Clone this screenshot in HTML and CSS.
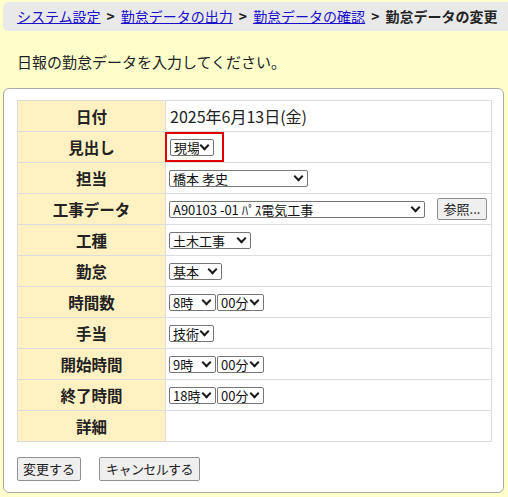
FILE: index.html
```html
<!DOCTYPE html>
<html lang="ja">
<head>
<meta charset="utf-8">
<title>勤怠データの変更</title>
<link rel="stylesheet" href="styles.css">
</head>
<body>
<div class="crumbs">
  <a href="#">システム設定</a><span class="sep">&gt;</span><a href="#">勤怠データの出力</a><span class="sep">&gt;</span><a href="#">勤怠データの確認</a><span class="sep">&gt;</span><span class="current">勤怠データの変更</span>
</div>
<p class="msg">日報の勤怠データを入力してください。</p>
<div class="panel">
  <table class="form">
    <tr><th>日付</th><td class="date">2025年6月13日(金)</td></tr>
    <tr><th>見出し</th><td><span class="mark"><span class="sel"><select class="w44"><option>現場</option></select></span></span></td></tr>
    <tr><th>担当</th><td><span class="sel"><select class="w139"><option>橋本 孝史</option></select></span></td></tr>
    <tr><th>工事データ</th><td><div class="row"><span class="sel"><select class="w256"><option>A90103 -01 ﾊﾟｽ電気工事</option></select></span><button class="ref">参照...</button></div></td></tr>
    <tr><th>工種</th><td><span class="sel"><select class="w82"><option>土木工事</option></select></span></td></tr>
    <tr><th>勤怠</th><td><span class="sel"><select class="w53"><option>基本</option></select></span></td></tr>
    <tr><th>時間数</th><td><div class="row pair"><span class="sel"><select class="w47"><option>8時</option></select></span><span class="sel"><select class="w47"><option>00分</option></select></span></div></td></tr>
    <tr><th>手当</th><td><span class="sel"><select class="w45"><option>技術</option></select></span></td></tr>
    <tr><th>開始時間</th><td><div class="row pair"><span class="sel"><select class="w47"><option>9時</option></select></span><span class="sel"><select class="w47"><option>00分</option></select></span></div></td></tr>
    <tr><th>終了時間</th><td><div class="row pair"><span class="sel"><select class="w47"><option>18時</option></select></span><span class="sel"><select class="w47"><option>00分</option></select></span></div></td></tr>
    <tr><th>詳細</th><td></td></tr>
  </table>
  <div class="actions">
    <button class="btn b-ok">変更する</button>
    <button class="btn b-cancel">キャンセルする</button>
  </div>
</div>
</body>
</html>
```
FILE: styles.css
```css
html, body {
  overflow: hidden;
}
body {
  margin: 0;
  padding: 2px 0 0 3px;
  background: #ffffcc;
  font-family: "Noto Sans CJK JP", "Noto Sans", sans-serif;
  color: #222;
}
.crumbs {
  height: 29px;
  line-height: 29px;
  margin-right: -12px;
  padding-left: 14px;
  background: #e9e9e9;
  border-radius: 6px;
  font-size: 14px;
  white-space: nowrap;
  overflow: hidden;
}
.crumbs a {
  color: #1a0dcc;
  text-decoration: underline;
}
.crumbs .sep {
  font-weight: bold;
  margin: 0 6px;
  color: #222;
}
.crumbs .current {
  font-weight: bold;
  color: #222;
}
.msg {
  margin: 22px 0 17px;
  padding-left: 14px;
  font-size: 15px;
  line-height: 18px;
}
.panel {
  width: 475px;
  padding: 11px 11px 11px 13px;
  background: #fff;
  border: 1px solid #a9a9a9;
  border-radius: 6px;
}
.form {
  width: 475px;
  border-collapse: collapse;
  border: 1px solid #d6d6d6;
}
.form th, .form td {
  border: 1px solid #dcdcdc;
  height: 30px;
  padding: 0 0 0 3px;
}
.form th {
  width: 147px;
  background: #fff1c2;
  font-size: 15.5px;
  font-weight: bold;
  text-align: center;
  padding: 0;
}
.form td {
  font-size: 13px;
  line-height: 0;
}
.form td.date {
  font-size: 16px;
  line-height: 20px;
  padding-left: 4px;
}
.sel {
  display: inline-block;
  position: relative;
  vertical-align: middle;
  line-height: 0;
}
.sel::after {
  content: "";
  position: absolute;
  right: 6px;
  top: 3px;
  width: 5px;
  height: 5px;
  border-right: 2px solid #1a1a1a;
  border-bottom: 2px solid #1a1a1a;
  transform: rotate(45deg);
  pointer-events: none;
}
select {
  -webkit-appearance: none;
  appearance: none;
  box-sizing: border-box;
  height: 17px;
  font-family: "Noto Sans CJK JP", sans-serif;
  font-size: 13px;
  line-height: 15px;
  padding: 0 14px 0 3px;
  margin: 0;
  border: 1px solid #767676;
  border-radius: 2px;
  background-color: #fff;
  color: #111;
  vertical-align: top;
}
.w44 { width: 44px; }
.w45 { width: 45px; }
.w47 { width: 47px; }
.w53 { width: 53px; }
.w82 { width: 82px; }
.w139 { width: 139px; }
.w256 { width: 256px; }
.row {
  display: flex;
  align-items: center;
}
.pair {
  gap: 1px;
}
.mark {
  display: inline-block;
  border: 2px solid #e00000;
  padding: 5px 8px 4px 3px;
  margin-left: -4px;
  line-height: 0;
  vertical-align: middle;
}
.ref {
  margin-left: 12px;
  width: 50px;
  height: 22px;
}
button {
  font-family: "Noto Sans CJK JP", sans-serif;
  font-size: 13px;
  color: #222;
  background: #efefef;
  border: 1px solid #8f8f8f;
  border-radius: 2px;
  padding: 0;
  line-height: 18px;
}
.actions {
  display: flex;
  gap: 18px;
  margin-top: 15px;
}
.btn {
  height: 24px;
  padding: 0;
}
.b-ok { width: 64px; }
.b-cancel { width: 101px; letter-spacing: -0.6px; }
```
